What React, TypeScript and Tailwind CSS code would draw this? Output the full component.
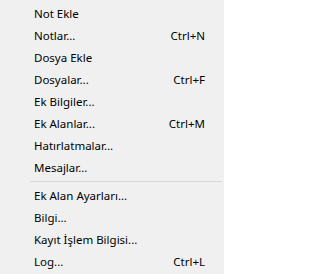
import React from 'react';

const groups = [
  [
    { label: 'Not Ekle' },
    { label: 'Notlar...', shortcut: 'Ctrl+N' },
    { label: 'Dosya Ekle' },
    { label: 'Dosyalar...', shortcut: 'Ctrl+F' },
    { label: 'Ek Bilgiler...' },
    { label: 'Ek Alanlar...', shortcut: 'Ctrl+M' },
    { label: 'Hatırlatmalar...' },
    { label: 'Mesajlar...' },
  ],
  [
    { label: 'Ek Alan Ayarları...' },
    { label: 'Bilgi...' },
    { label: 'Kayıt İşlem Bilgisi...' },
    { label: 'Log...', shortcut: 'Ctrl+L' },
  ],
];

export default function App() {
  return (
    <div
      className="w-[224px] h-[274px] bg-[#f0f0f0] pt-[3px] text-[11.5px] text-black overflow-hidden"
      style={{ fontFamily: '"Noto Sans", "Open Sans", sans-serif' }}
    >
      {groups.map((items, g) => (
        <div key={g}>
          {g > 0 && (
            <div className="h-[6px] pt-[2px] ml-[30px] mr-[2px]">
              <div className="w-full h-px bg-[#d7d7d7]" />
            </div>
          )}
          {items.map((item) => (
            <div key={item.label} className="h-[22px] flex items-center justify-between pl-[34px] pr-[19px]">
              <span>{item.label}</span>
              {item.shortcut && <span>{item.shortcut}</span>}
            </div>
          ))}
        </div>
      ))}
    </div>
  );
}
